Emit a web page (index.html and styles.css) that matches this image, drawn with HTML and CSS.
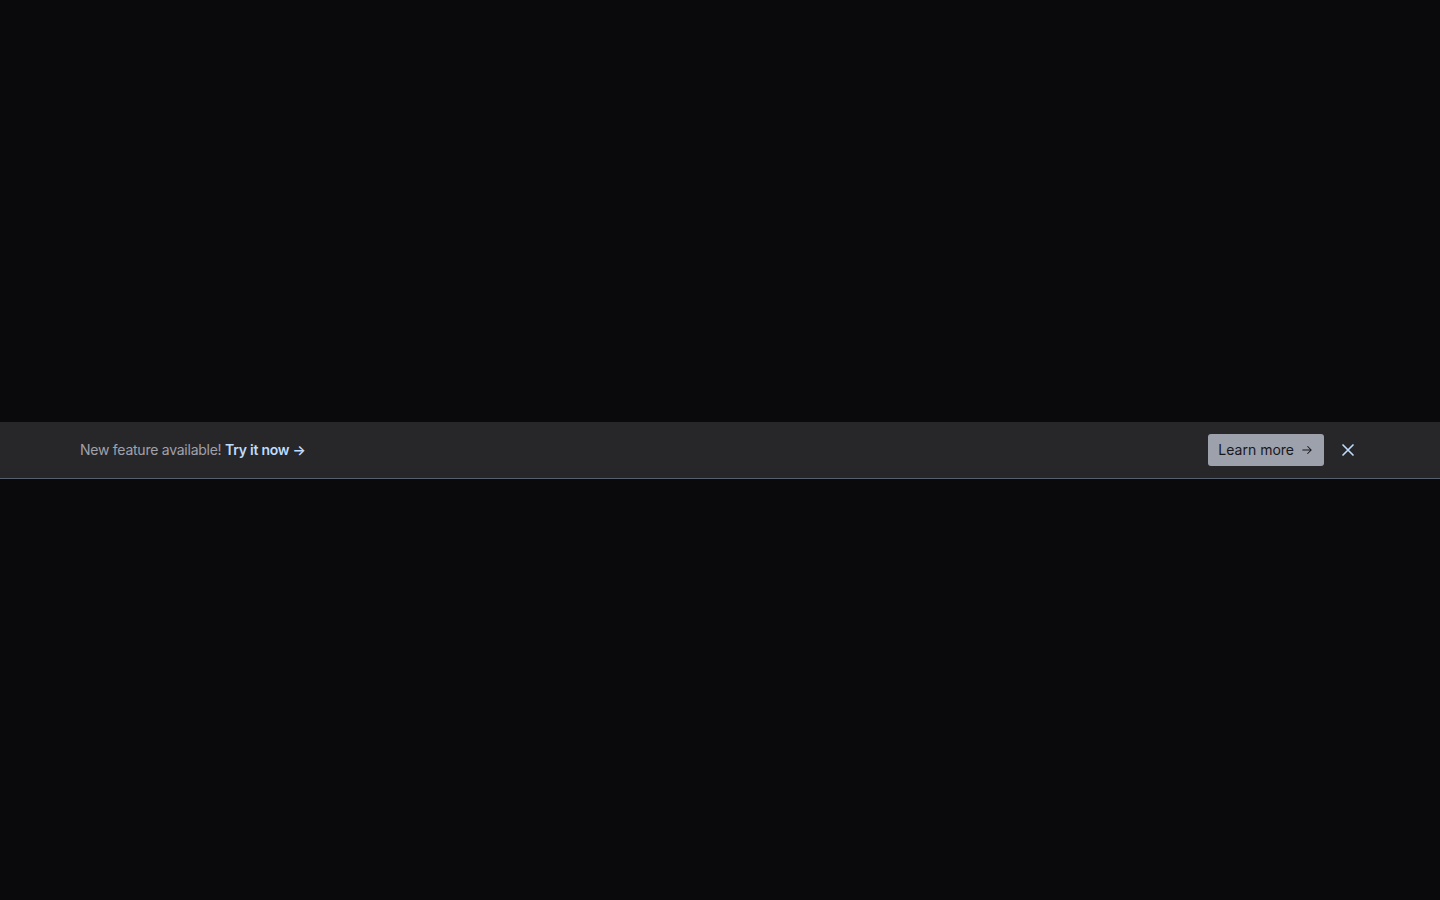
FILE: index.html
```html
<!DOCTYPE html>
<html>
  <head>
    <title>Announcement banner</title>

    <link rel="stylesheet" href="styles.css">
  </head>
  <body>
    <main class="page">
      <div class="banner">
        <div class="banner-inner">
          <p class="banner-text">
            New feature available!
            <a href="#" class="banner-link">Try it now <span class="arrow">&rarr;</span></a>
          </p>
          <div class="banner-actions">
            <a href="#" class="btn-learn">
              Learn more
              <svg class="btn-icon" viewBox="0 0 20 20" fill="none" stroke="currentColor" stroke-width="1.5" stroke-linecap="round" stroke-linejoin="round">
                <path d="M4 10h12M11 5l5 5-5 5" />
              </svg>
            </a>
            <button type="button" class="btn-close" aria-label="Dismiss">
              <svg viewBox="0 0 24 24" fill="none" stroke="currentColor" stroke-width="2" stroke-linecap="round" stroke-linejoin="round">
                <path d="M6 18L18 6M6 6l12 12" />
              </svg>
            </button>
          </div>
        </div>
      </div>
    </main>
  </body>
</html>
```

FILE: styles.css
```css
html,
body {
  height: 100%;
}

body {
  margin: 0;
  background: #0a0a0c;
  font-family: Inter, "Noto Sans", "Liberation Sans", sans-serif;
}

.page {
  min-height: 100%;
  display: flex;
  flex-direction: column;
  justify-content: center;
}

.banner {
  background: #27272a;
  border-bottom: 1px solid #56606f;
}

.banner-inner {
  max-width: 1280px;
  height: 56px;
  margin: 0 auto;
  display: flex;
  align-items: center;
  justify-content: space-between;
}

.banner-text {
  margin: 0;
  font-size: 14px;
  letter-spacing: -0.25px;
  color: #a1a1aa;
}

.banner-link {
  color: #bfdbfe;
  font-weight: 600;
  text-decoration: none;
}

.banner-actions {
  display: flex;
  align-items: center;
  gap: 12px;
}

.btn-learn {
  display: flex;
  align-items: center;
  gap: 6px;
  height: 32px;
  padding: 0 10px;
  box-sizing: border-box;
  background: #9da1ac;
  border-radius: 3px;
  color: #18181b;
  font-size: 14px;
  font-weight: 400;
  text-decoration: none;
}

.btn-icon {
  width: 14px;
  height: 14px;
}

.btn-close {
  display: flex;
  padding: 2px;
  border: none;
  background: none;
  color: #bfdbfe;
  cursor: pointer;
}

.btn-close svg {
  width: 20px;
  height: 20px;
}
```
